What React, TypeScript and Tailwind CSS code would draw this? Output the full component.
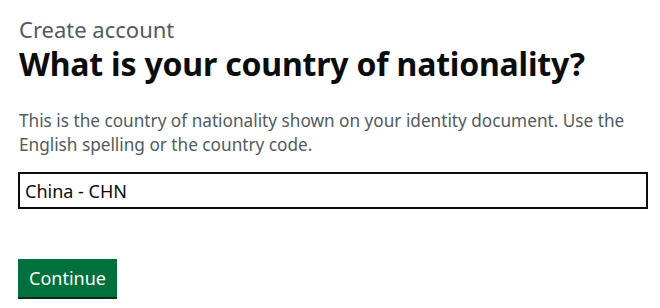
export default function App() {
  return (
    <div className="min-h-screen bg-white px-[19px] pt-[14px] font-['Noto_Sans',sans-serif] text-[#0b0c0c]">
      <span className="block text-[22px] leading-[30px] text-[#505a5f]">Create account</span>
      <h1 className="text-[32px] font-bold leading-[40px] tracking-[-0.2px]">What is your country of nationality?</h1>
      <p className="mt-[25px] text-[17.2px] leading-[24px] text-[#505a5f]">
        This is the country of nationality shown on your identity document. Use the English spelling or the country code.
      </p>
      <input
        type="text"
        defaultValue="China - CHN"
        className="mt-[15px] -ml-px block h-[37px] w-[630px] border-2 border-[#0b0c0c] px-[5px] text-[18px] text-[#0b0c0c] outline-none"
      />
      <button
        type="button"
        className="mt-[50px] -ml-px h-[38px] w-[99px] bg-[#00703c] text-[18px] text-white shadow-[0_2px_0_#002d18]"
      >
        Continue
      </button>
    </div>
  );
}
